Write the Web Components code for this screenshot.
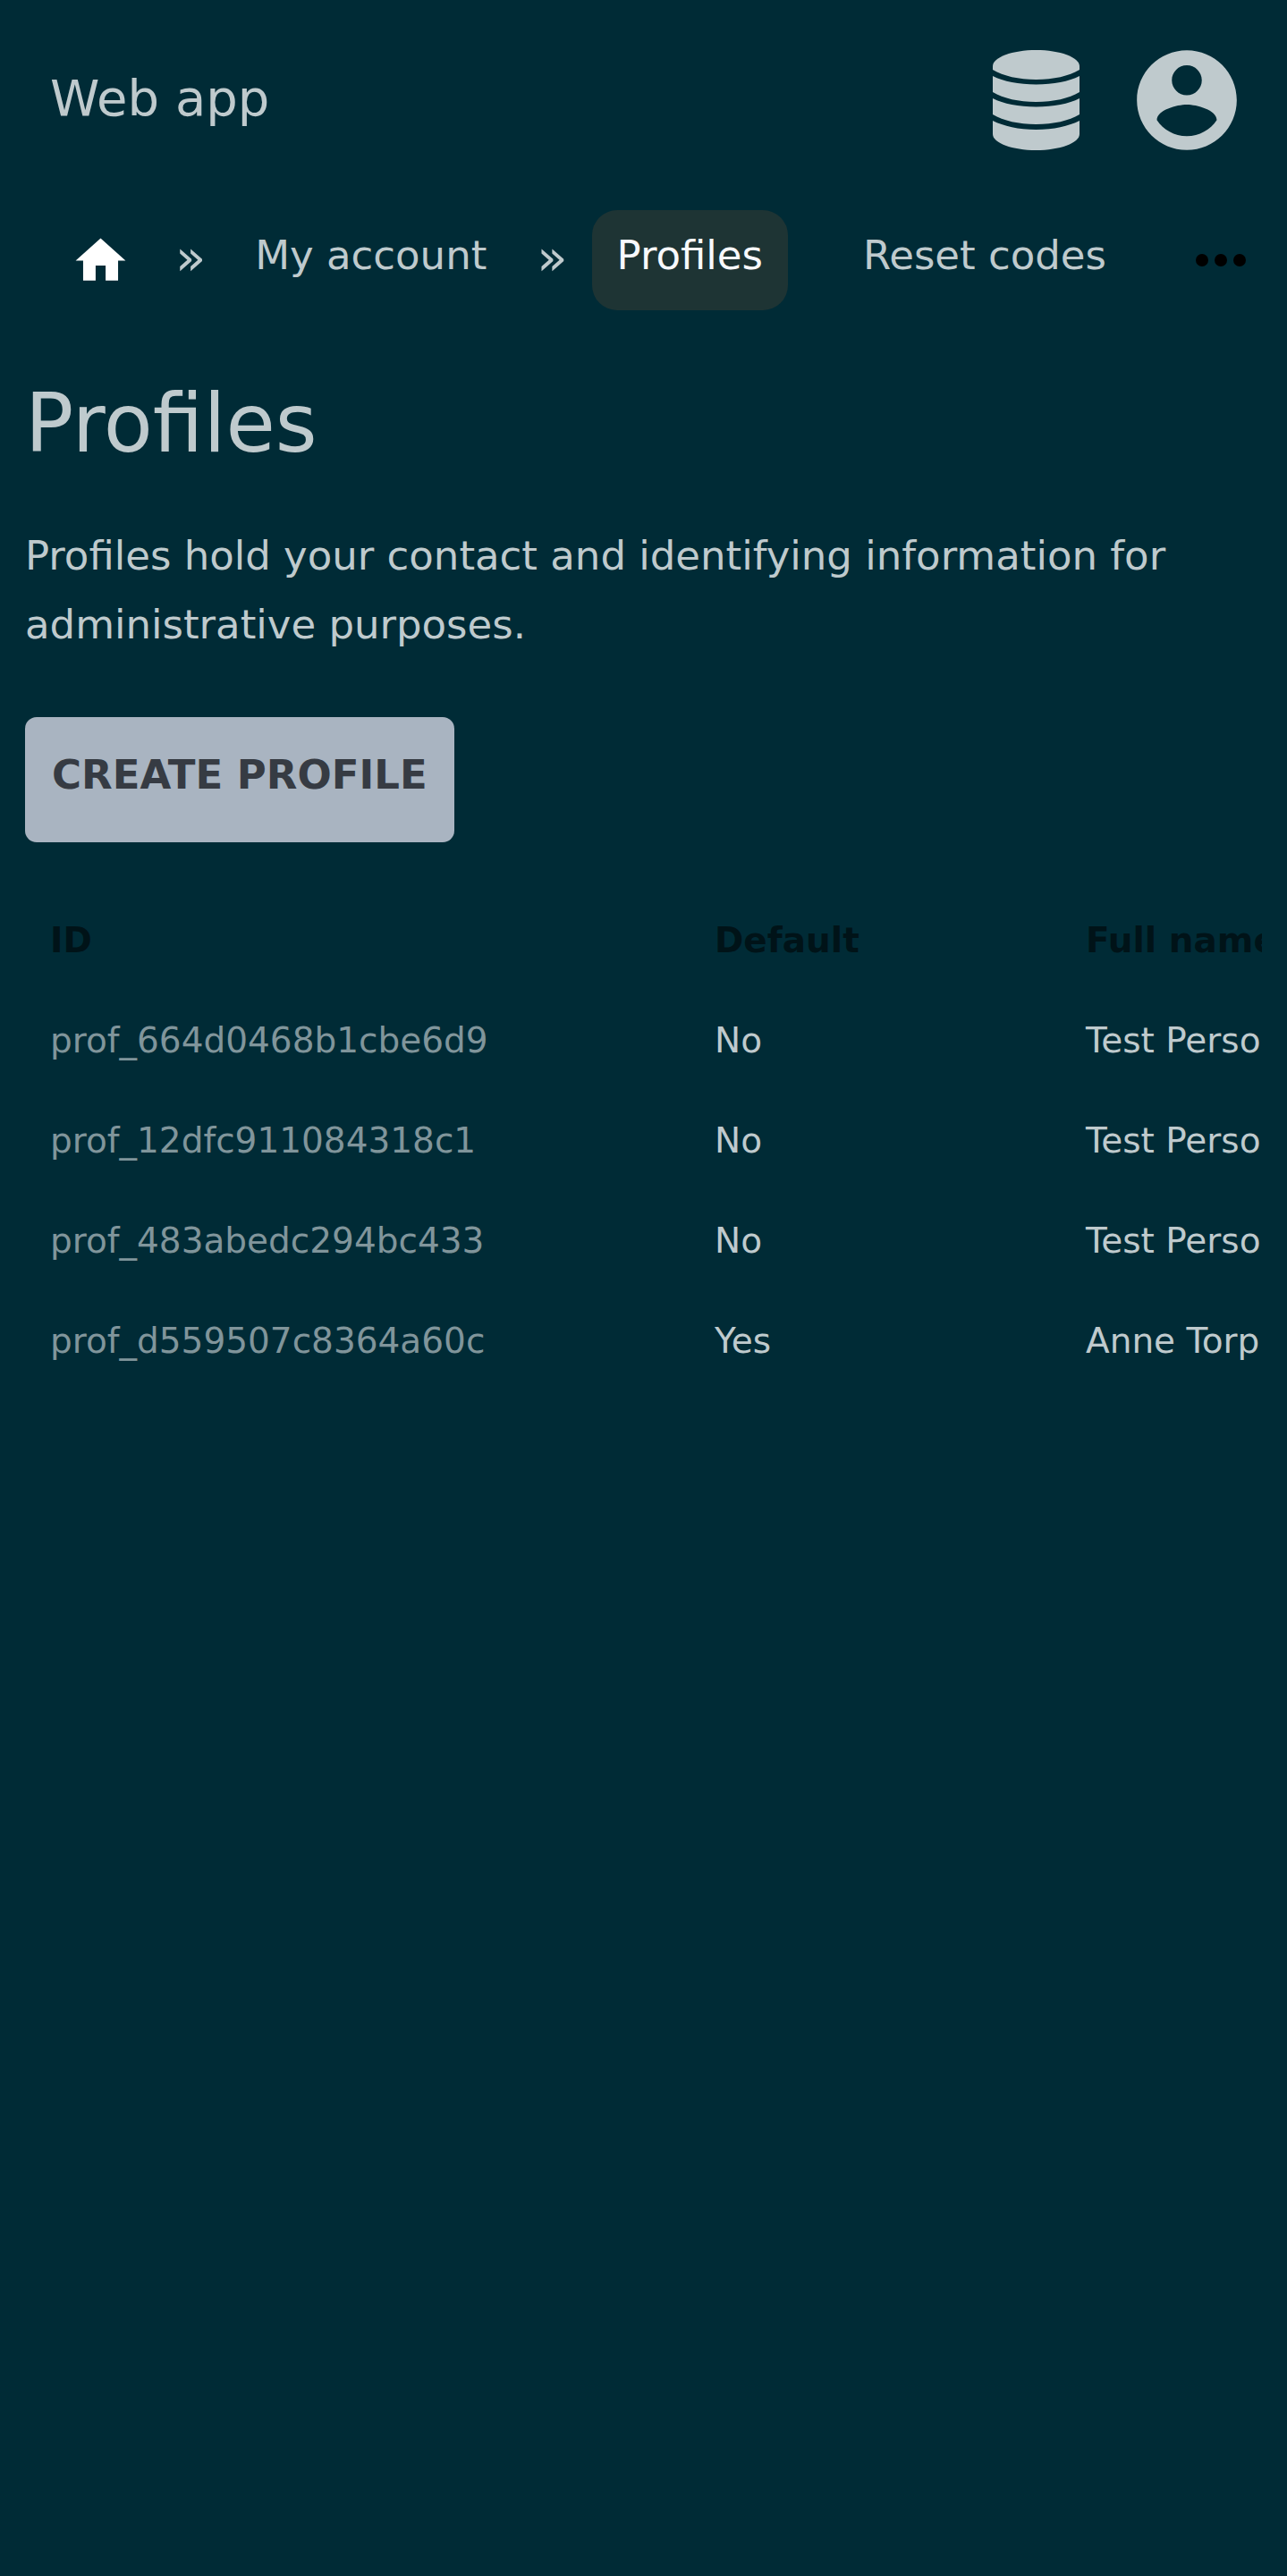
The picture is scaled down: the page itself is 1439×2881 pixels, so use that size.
<!DOCTYPE html>
<html lang="en">
<head>
<meta charset="utf-8">
<meta name="viewport" content="width=device-width, initial-scale=1">
<title>Profiles</title>
<style>
  html { background: #002b36; }
  body {
    margin: 0;
    --text: #bfcacd;
    --muted: #80959b;
    --heading: #001318;
    color: var(--text);
    font: 45px/77px "DejaVu Sans", sans-serif;
  }
</style>
</head>
<body>
<web-app>
  <app-header slot="header">Web app</app-header>
  <app-trail slot="nav">
    <trail-link href="#home" icon="home" label="Home"></trail-link>
    <trail-separator></trail-separator>
    <trail-link href="#account">My account</trail-link>
    <trail-separator></trail-separator>
    <trail-link href="#profiles" current>Profiles</trail-link>
    <trail-link href="#codes" sibling>Reset codes</trail-link>
    <more-button slot="end"></more-button>
  </app-trail>
  <page-intro heading="Profiles">Profiles hold your contact and identifying information for administrative purposes.</page-intro>
  <action-button>CREATE PROFILE</action-button>
  <profile-table></profile-table>
</web-app>
<script>
  const define = (name, html, setup) => customElements.define(name, class extends HTMLElement {
    constructor() {
      super();
      this.attachShadow({ mode: "open" });
    }
    connectedCallback() {
      this.shadowRoot.innerHTML = html;
      if (setup) setup(this, this.shadowRoot);
    }
  });

  define("web-app", `
    <style>
      :host { display: block; }
      main { display: flex; flex-direction: column; align-items: flex-start; padding: 0 28px; }
    </style>
    <slot name="header"></slot>
    <slot name="nav"></slot>
    <main><slot></slot></main>`);

  define("app-header", `
    <style>
      :host { display: block; }
      header { display: flex; align-items: center; justify-content: space-between; height: 224px; padding: 0 45px 0 56px; font-size: 56px; }
      .actions { display: flex; align-items: center; gap: 53px; }
      a { padding-bottom: 6px; color: inherit; text-decoration: none; }
      button { display: flex; padding: 0; border: 0; background: none; color: inherit; }
      svg { display: block; fill: currentColor; }
    </style>
    <header>
      <a href="#app"><slot></slot></a>
      <div class="actions">
        <button aria-label="Data">
          <svg width="97" height="112" viewBox="0 0 97 112">
            <path d="M0 18C0 8 22 0 48.500 0S97 8 97 18V22C85 29 68 33 48.500 33S12 29 0 22Z"/>
            <path d="M0 29C12 35 29 38.500 48.500 38.500S85 35 97 29V47C85 54 68 58 48.500 58S12 54 0 47Z"/>
            <path d="M0 54C12 60 29 63.500 48.500 63.500S85 60 97 54V72C85 79 68 83 48.500 83S12 79 0 72Z"/>
            <path d="M0 79C12 85 29 89 48.500 89S85 85 97 79V94C97 104 75 112 48.500 112S0 104 0 94Z"/>
          </svg>
        </button>
        <button aria-label="Account">
          <svg width="134" height="134" viewBox="0 0 24 24">
            <path d="M12 2C6.480 2 2 6.480 2 12s4.480 10 10 10 10-4.480 10-10S17.520 2 12 2zm0 3c1.660 0 3 1.340 3 3s-1.340 3-3 3-3-1.340-3-3 1.340-3 3-3zm0 14.200c-2.500 0-4.710-1.280-6-3.220.030-1.990 4-3.080 6-3.080 1.990 0 5.970 1.090 6 3.080-1.290 1.940-3.500 3.220-6 3.220z"/>
          </svg>
        </button>
      </div>
    </header>`);

  define("app-trail", `
    <style>
      :host { display: block; }
      nav { display: flex; align-items: center; justify-content: space-between; height: 134px; padding: 0 32px 0 56px; }
      .links { display: flex; align-items: center; }
    </style>
    <nav aria-label="Breadcrumb">
      <div class="links"><slot></slot></div>
      <slot name="end"></slot>
    </nav>`);

  define("trail-link", `
    <style>
      :host { display: block; }
      :host([sibling]) { margin-left: 56px; }
      a { display: block; box-sizing: border-box; height: 112px; padding: 12px 28px 23px; border-radius: 28px; color: inherit; text-decoration: none; white-space: nowrap; }
      :host([current]) a { background: #1e3434; color: #f8f9fc; }
      :host([icon]) a { display: flex; align-items: center; justify-content: center; width: 112px; padding: 0; color: #fff; }
      svg { fill: currentColor; }
    </style>
    <a><slot></slot></a>`,
    (host, root) => {
      const link = root.querySelector("a");
      link.href = host.getAttribute("href");
      if (host.hasAttribute("current")) link.setAttribute("aria-current", "page");
      if (host.hasAttribute("icon")) {
        link.setAttribute("aria-label", host.getAttribute("label"));
        link.innerHTML = '<svg width="67" height="67" viewBox="0 0 24 24"><path d="M10 20v-6h4v6h5v-8h3L12 3 2 12h3v8z"/></svg>';
      }
    });

  define("trail-separator", `
    <style>
      :host { display: block; padding: 0 27px 8px 28px; font-size: 56px; }
    </style>
    <span aria-hidden="true">»</span>`);

  define("more-button", `
    <style>
      :host { display: block; }
      button { display: flex; padding: 0; border: 0; background: none; color: #000; }
      svg { fill: currentColor; }
    </style>
    <button aria-label="More">
      <svg width="84" height="84" viewBox="0 0 24 24"><circle cx="6" cy="12" r="2"/><circle cx="12" cy="12" r="2"/><circle cx="18" cy="12" r="2"/></svg>
    </button>`);

  define("page-intro", `
    <style>
      :host { display: block; }
      h1 { margin: 60px 0 53px; font-size: 90px; font-weight: 400; line-height: 112px; }
      p { margin: 0; }
    </style>
    <h1></h1>
    <p><slot></slot></p>`,
    (host, root) => { root.querySelector("h1").textContent = host.getAttribute("heading"); });

  define("action-button", `
    <style>
      :host { display: block; margin: 65px 0 54px; }
      button { display: block; height: 140px; padding: 26px 30px 37px; border: 0; border-radius: 13px; background: #a9b4c1; color: #363b43; font: inherit; font-weight: 700; white-space: nowrap; }
    </style>
    <button><slot></slot></button>`);

  define("profile-table", `
    <style>
      :host { display: block; align-self: stretch; overflow-x: auto; scrollbar-width: none; font-size: 39px; line-height: 56px; }
      table { border-collapse: collapse; table-layout: fixed; width: 1600px; }
      th, td { height: 56px; padding: 28px; text-align: left; white-space: nowrap; }
      th { color: var(--heading); font-weight: 700; }
      td:first-child { color: var(--muted); }
      .id { width: 687px; }
      .default { width: 359px; }
    </style>
    <table>
      <thead><tr><th class="id">ID</th><th class="default">Default</th><th>Full name</th></tr></thead>
      <tbody></tbody>
    </table>`,
    (host, root) => {
      const profiles = [
        ["prof_664d0468b1cbe6d9", "No", "Test Person"],
        ["prof_12dfc911084318c1", "No", "Test Person"],
        ["prof_483abedc294bc433", "No", "Test Person"],
        ["prof_d559507c8364a60c", "Yes", "Anne Torp"]
      ];
      const body = root.querySelector("tbody");
      for (const profile of profiles) {
        const row = body.insertRow();
        for (const value of profile) row.insertCell().textContent = value;
      }
    });
</script>
</body>
</html>
